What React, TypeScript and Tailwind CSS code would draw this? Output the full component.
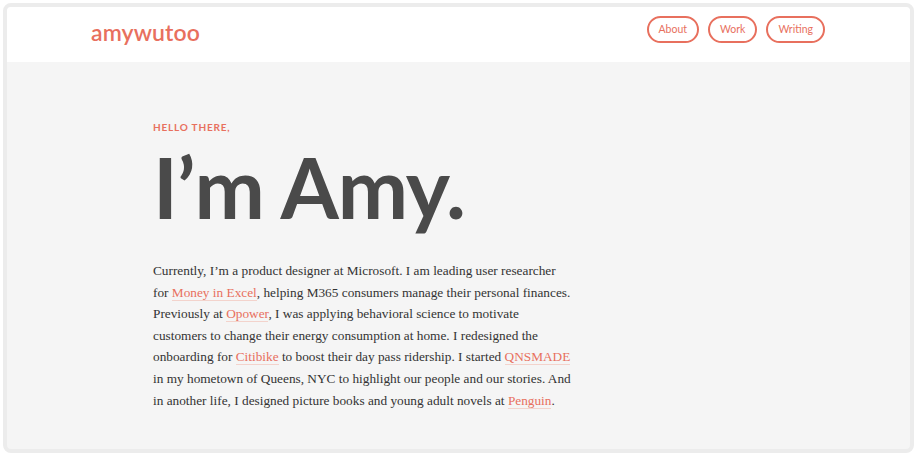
const Link = ({ children }: any) => (
  <a className="text-[#e8705e] border-b border-[#f3d3cc]">{children}</a>
);

const NavButton = ({ label }: any) => (
  <button className="h-[27px] px-[10px] rounded-full border-2 border-[#e8705e] text-[#e8705e] text-[10.5px] font-['Lato',sans-serif] leading-none">
    {label}
  </button>
);

export default function App() {
  return (
    <div className="w-[917px] h-[457px] bg-white p-[3px]">
      <div className="h-[450px] border-[4px] border-[#ececec] rounded-[8px] overflow-hidden flex flex-col bg-[#f5f5f5]">
        <header className="h-[55px] bg-white flex items-center justify-between pl-[84px] pr-[85px]">
          <div className="text-[#e8705e] text-[23px] font-semibold tracking-[0.1px] font-['Lato',sans-serif] -mt-[4px]">
            amywutoo
          </div>
          <nav className="flex gap-[9px] -mt-[11px]">
            <NavButton label="About" />
            <NavButton label="Work" />
            <NavButton label="Writing" />
          </nav>
        </header>
        <main className="pl-[146px] pt-[58px]">
          <p className="text-[#e8705e] text-[10px] font-bold tracking-[0.8px] font-['Lato',sans-serif]">
            HELLO THERE,
          </p>
          <h1 className="text-[#4a4a4a] text-[84px] font-bold leading-none mt-[10px] tracking-[-1px] font-['Lato',sans-serif]">
            I’m Amy.
          </h1>
          <p className="mt-[31px] whitespace-nowrap text-[#333] text-[13.3px] leading-[21.6px] font-['Liberation_Serif',serif]">
            Currently, I’m a product designer at Microsoft. I am leading user researcher
            <br />
            for <Link>Money in Excel</Link>, helping M365 consumers manage their personal finances.
            <br />
            Previously at <Link>Opower</Link>, I was applying behavioral science to motivate
            <br />
            customers to change their energy consumption at home. I redesigned the
            <br />
            onboarding for <Link>Citibike</Link> to boost their day pass ridership. I started{" "}
            <Link>QNSMADE</Link>
            <br />
            in my hometown of Queens, NYC to highlight our people and our stories. And
            <br />
            in another life, I designed picture books and young adult novels at <Link>Penguin</Link>.
          </p>
        </main>
      </div>
    </div>
  );
}
